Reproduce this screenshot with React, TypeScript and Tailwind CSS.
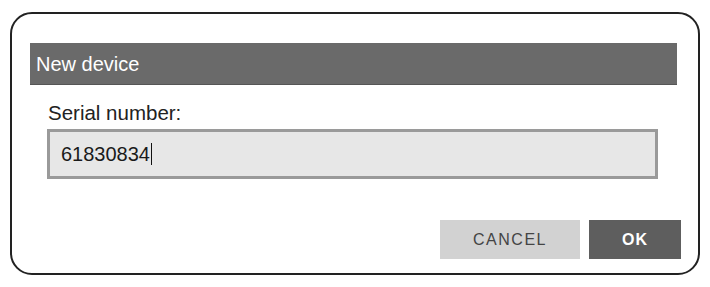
import React from 'react';

const App: React.FC = () => {
  const serial = '61830834';

  return (
    <div className="w-[710px] h-[287px] bg-white pt-[12px] pl-[10px]" style={{ fontFamily: '"Liberation Sans", Arial, sans-serif' }}>
      <div className="w-[690px] h-[263px] border-2 border-[#222] rounded-[22px] flex flex-col">
        <div className="ml-[18px] mt-[29px] w-[647px] h-[42px] bg-[#6a6a6a] border-b border-[#555] flex items-center pl-[6px]">
          <span className="text-white text-[20px] leading-none">New device</span>
        </div>
        <div className="ml-[36px] mt-[16px] text-[20.5px] leading-[24px] text-[#222]">Serial number:</div>
        <div className="ml-[35px] mt-[4px] w-[611px] h-[50px] border-[3px] border-[#9a9a9a] bg-[#e7e7e7] flex items-center pl-[11px]">
          <span className="text-[20px] leading-none text-[#1a1a1a]">{serial}</span>
          <span className="w-px h-[22px] bg-[#111] ml-px" />
        </div>
        <div className="mt-[41px] mr-[17px] flex justify-end gap-[9px]">
          <button className="w-[140px] h-[39px] bg-[#d2d2d2] text-[#444] text-[16px] tracking-[1.5px]">CANCEL</button>
          <button className="w-[92px] h-[39px] bg-[#5e5e5e] text-white text-[16px] font-semibold tracking-[1px]">OK</button>
        </div>
      </div>
    </div>
  );
};

export default App;
